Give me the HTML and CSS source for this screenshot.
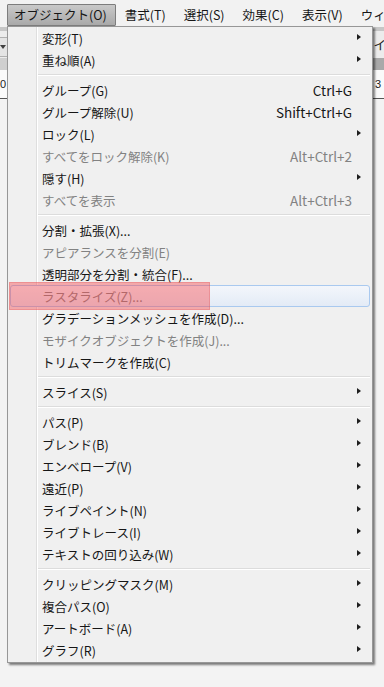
FILE: index.html
```html
<!DOCTYPE html>
<html lang="ja">
<head>
    <meta charset="UTF-8">
    <meta name="viewport" content="width=device-width, initial-scale=1.0">
    <title>オブジェクト メニュー</title>
    <link rel="stylesheet" href="styles.css">
</head>
<body>
    <div class="menubar">
        <span class="menubar-item open">オブジェクト(O)</span>
        <span class="menubar-item">書式(T)</span>
        <span class="menubar-item">選択(S)</span>
        <span class="menubar-item">効果(C)</span>
        <span class="menubar-item">表示(V)</span>
        <span class="menubar-item">ウィンドウ(W)</span>
    </div>
    <div class="workspace">
        <div class="strip"></div>
        <div class="controlbar">
            <span class="combo"><span class="combo-arrow"></span></span>
            <span class="control-label">イ</span>
        </div>
        <div class="ruler-band"></div>
        <div class="ruler">
            <span>0</span>
            <span>3</span>
        </div>
    </div>

    <ul class="dropdown">
        <li class="item"><span class="label">変形(T)</span><span class="arrow"></span></li>
        <li class="item"><span class="label">重ね順(A)</span><span class="arrow"></span></li>
        <li class="sep"></li>
        <li class="item"><span class="label">グループ(G)</span><span class="key">Ctrl+G</span><span class="noarrow"></span></li>
        <li class="item"><span class="label">グループ解除(U)</span><span class="key">Shift+Ctrl+G</span><span class="noarrow"></span></li>
        <li class="item"><span class="label">ロック(L)</span><span class="arrow"></span></li>
        <li class="item disabled"><span class="label">すべてをロック解除(K)</span><span class="key">Alt+Ctrl+2</span><span class="noarrow"></span></li>
        <li class="item"><span class="label">隠す(H)</span><span class="arrow"></span></li>
        <li class="item disabled"><span class="label">すべてを表示</span><span class="key">Alt+Ctrl+3</span><span class="noarrow"></span></li>
        <li class="sep"></li>
        <li class="item"><span class="label">分割・拡張(X)...</span></li>
        <li class="item disabled"><span class="label">アピアランスを分割(E)</span></li>
        <li class="item"><span class="label">透明部分を分割・統合(F)...</span></li>
        <li class="item disabled hover"><span class="label">ラスタライズ(Z)...</span></li>
        <li class="item"><span class="label">グラデーションメッシュを作成(D)...</span></li>
        <li class="item disabled"><span class="label">モザイクオブジェクトを作成(J)...</span></li>
        <li class="item"><span class="label">トリムマークを作成(C)</span></li>
        <li class="sep"></li>
        <li class="item"><span class="label">スライス(S)</span><span class="arrow"></span></li>
        <li class="sep"></li>
        <li class="item"><span class="label">パス(P)</span><span class="arrow"></span></li>
        <li class="item"><span class="label">ブレンド(B)</span><span class="arrow"></span></li>
        <li class="item"><span class="label">エンベロープ(V)</span><span class="arrow"></span></li>
        <li class="item"><span class="label">遠近(P)</span><span class="arrow"></span></li>
        <li class="item"><span class="label">ライブペイント(N)</span><span class="arrow"></span></li>
        <li class="item"><span class="label">ライブトレース(I)</span><span class="arrow"></span></li>
        <li class="item"><span class="label">テキストの回り込み(W)</span><span class="arrow"></span></li>
        <li class="sep"></li>
        <li class="item"><span class="label">クリッピングマスク(M)</span><span class="arrow"></span></li>
        <li class="item"><span class="label">複合パス(O)</span><span class="arrow"></span></li>
        <li class="item"><span class="label">アートボード(A)</span><span class="arrow"></span></li>
        <li class="item"><span class="label">グラフ(R)</span><span class="arrow"></span></li>
    </ul>

    <div class="note-mark"></div>
</body>
</html>
```

FILE: styles.css
```css
body {
    margin: 0;
    background: #f3f3f3;
    font-family: "Noto Sans CJK JP", "Noto Sans", sans-serif;
    font-size: 12.5px;
    color: #161616;
    height: 687px;
    overflow: hidden;
}

/* top menu bar */
.menubar {
    height: 27px;
    display: flex;
    align-items: center;
    gap: 2px;
    padding-left: 7px;
    background: #f2f2f2;
    white-space: nowrap;
    overflow: hidden;
}
.menubar-item {
    height: 20px;
    line-height: 20px;
    padding: 0 8px 0 6px;
    border: 1px solid transparent;
    margin-top: 3px;
}
.menubar-item.open {
    border-color: #7d7d7d;
    background: linear-gradient(#c9c9c9, #a9a9a9);
    border-radius: 1px;
}

/* things behind the menu */
.strip {
    height: 4px;
    background: #c6c6c6;
}
.controlbar {
    height: 27px;
    display: flex;
    justify-content: space-between;
    align-items: center;
    background: #ececec;
}
.combo {
    width: 7px;
    height: 18px;
    margin-top: 4px;
    display: flex;
    align-items: center;
    justify-content: flex-end;
    border-top: 1px solid #b0b0b0;
    border-bottom: 1px solid #b0b0b0;
    background: #e4e4e4;
}
.combo-arrow {
    width: 0;
    height: 0;
    margin-right: 1px;
    border-left: 3px solid transparent;
    border-right: 3px solid transparent;
    border-top: 4px solid #404040;
}
.control-label {
    margin-right: -2px;
    color: #222;
}
.ruler-band {
    height: 12px;
    background: linear-gradient(to right, #cfcfcf 20px, #a9a9a9 20px);
}
.ruler {
    height: 28px;
    display: flex;
    justify-content: space-between;
    align-items: center;
    padding: 0 3px 0 0;
    background: #fafafa;
    border-bottom: 1px solid #555;
    font-family: "Liberation Sans", sans-serif;
    font-size: 11px;
    color: #222;
}

/* the open dropdown */
.dropdown {
    position: absolute;
    left: 7px;
    top: 26px;
    width: 364px;
    margin: 0;
    padding: 0 0 1px;
    list-style: none;
    border: 1px solid #979797;
    background:
        linear-gradient(to right, transparent 28px, #dedede 28px, #dedede 29px, #fff 29px, #fff 30px, transparent 30px),
        #f0f0f0;
    box-shadow: 2px 2px 2px rgba(0, 0, 0, 0.5);
}
.item {
    height: 22px;
    box-sizing: border-box;
    margin: 0 2px;
    padding-left: 31px;
    display: flex;
    align-items: center;
    border: 1px solid transparent;
    border-radius: 3px;
    white-space: nowrap;
}
.item .label {
    flex: 1;
}
.item .key {
    text-align: right;
    font-size: 13.5px;
}
.item .arrow,
.item .noarrow {
    width: 17px;
    height: 22px;
    position: relative;
}
.item .arrow::after {
    content: "";
    position: absolute;
    left: 5px;
    top: 7px;
    border-left: 4px solid #1e1e1e;
    border-top: 3.5px solid transparent;
    border-bottom: 3.5px solid transparent;
}
.item.disabled {
    color: #828282;
}
.item.hover {
    border-color: #a9c9ef;
    background: linear-gradient(#f3f6fb, #e3ebf6);
}
.sep {
    height: 8px;
    margin: 0 2px 0 30px;
    position: relative;
}
.sep::after {
    content: "";
    position: absolute;
    left: 0;
    right: 0;
    top: 3px;
    border-top: 1px solid #dcdcdc;
    border-bottom: 1px solid #fff;
}

/* red annotation box over the raster item */
.note-mark {
    position: absolute;
    left: 9px;
    top: 282px;
    width: 201px;
    height: 28px;
    background: rgba(248, 70, 75, 0.42);
    box-shadow: inset 0 0 0 1px rgba(220, 70, 75, 0.25);
}
```
